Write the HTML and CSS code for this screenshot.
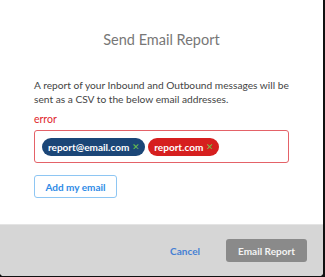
FILE: index.html
```html
<!DOCTYPE html>
<html lang="en">
<head>
  <meta charset="UTF-8">
  <title>Send Email Report</title>
  <link rel="stylesheet" href="styles.css">
</head>
<body>
  <div class="modal">
    <div class="modal-body">
      <h2 class="modal-title">Send Email Report</h2>
      <p class="intro">A report of your Inbound and Outbound messages will be sent as a CSV to the below email addresses.</p>
      <div class="field-error">error</div>
      <div class="chip-input">
        <span class="chip chip-ok">report@email.com <span class="chip-x">&#x2715;</span></span>
        <span class="chip chip-bad">report.com <span class="chip-x">&#x2715;</span></span>
      </div>
      <button type="button" class="btn-outline">Add my email</button>
    </div>
    <div class="modal-footer">
      <button type="button" class="btn-link">Cancel</button>
      <button type="button" class="btn-primary">Email Report</button>
    </div>
  </div>
</body>
</html>
```

FILE: styles.css
```css
html, body { margin: 0; padding: 0; background: #111; }
body { font-family: Lato, 'Open Sans', sans-serif; width: 325px; height: 277px; overflow: hidden; }
.modal { width: 323px; height: 276px; background: #fff; border-radius: 0 0 4px 4px; overflow: hidden; display: flex; flex-direction: column; }
.modal-body { flex: 1; padding: 0 34px; }
.modal-title { margin: 31px 0 0; font-size: 14.5px; font-weight: 400; line-height: 18px; color: #777; text-align: center; }
.intro { margin: 29px 0 0; font-size: 10.2px; line-height: 14px; color: #444; }
.field-error { margin-top: 7px; font-size: 10.5px; line-height: 13px; color: #e0262b; }
.chip-input { margin-top: 4px; height: 31px; border: 1px solid #e46268; border-radius: 3px; display: flex; align-items: center; gap: 3px; padding: 0 7px; }
.chip { display: inline-flex; align-items: center; gap: 3px; height: 18px; padding: 0 5px 0 6px; border-radius: 9px; color: #fff; font-size: 10px; font-weight: 700; }
.chip-ok { background: #1b4677; }
.chip-bad { background: #d61f1f; }
.chip-x { color: #6cc04a; font-size: 9px; font-weight: 400; }
.btn-outline { margin-top: 12px; width: 83px; height: 23px; padding: 0; background: #fff; border: 1px solid #8ec6f3; border-radius: 3px; color: #2f8be6; font-family: inherit; font-size: 10px; font-weight: 700; }
.modal-footer { height: 51px; background: #d6d6d6; border-top: 1px solid #e4e4e4; display: flex; align-items: center; justify-content: flex-end; gap: 26px; padding-right: 16px; }
.btn-link { background: none; border: none; padding: 0; color: #4580d4; font-family: inherit; font-size: 10px; font-weight: 700; }
.btn-primary { width: 81px; height: 23px; background: #8a8a8a; border: none; border-radius: 3px; color: #f4f4f4; font-family: inherit; font-size: 10px; font-weight: 700; }
```
